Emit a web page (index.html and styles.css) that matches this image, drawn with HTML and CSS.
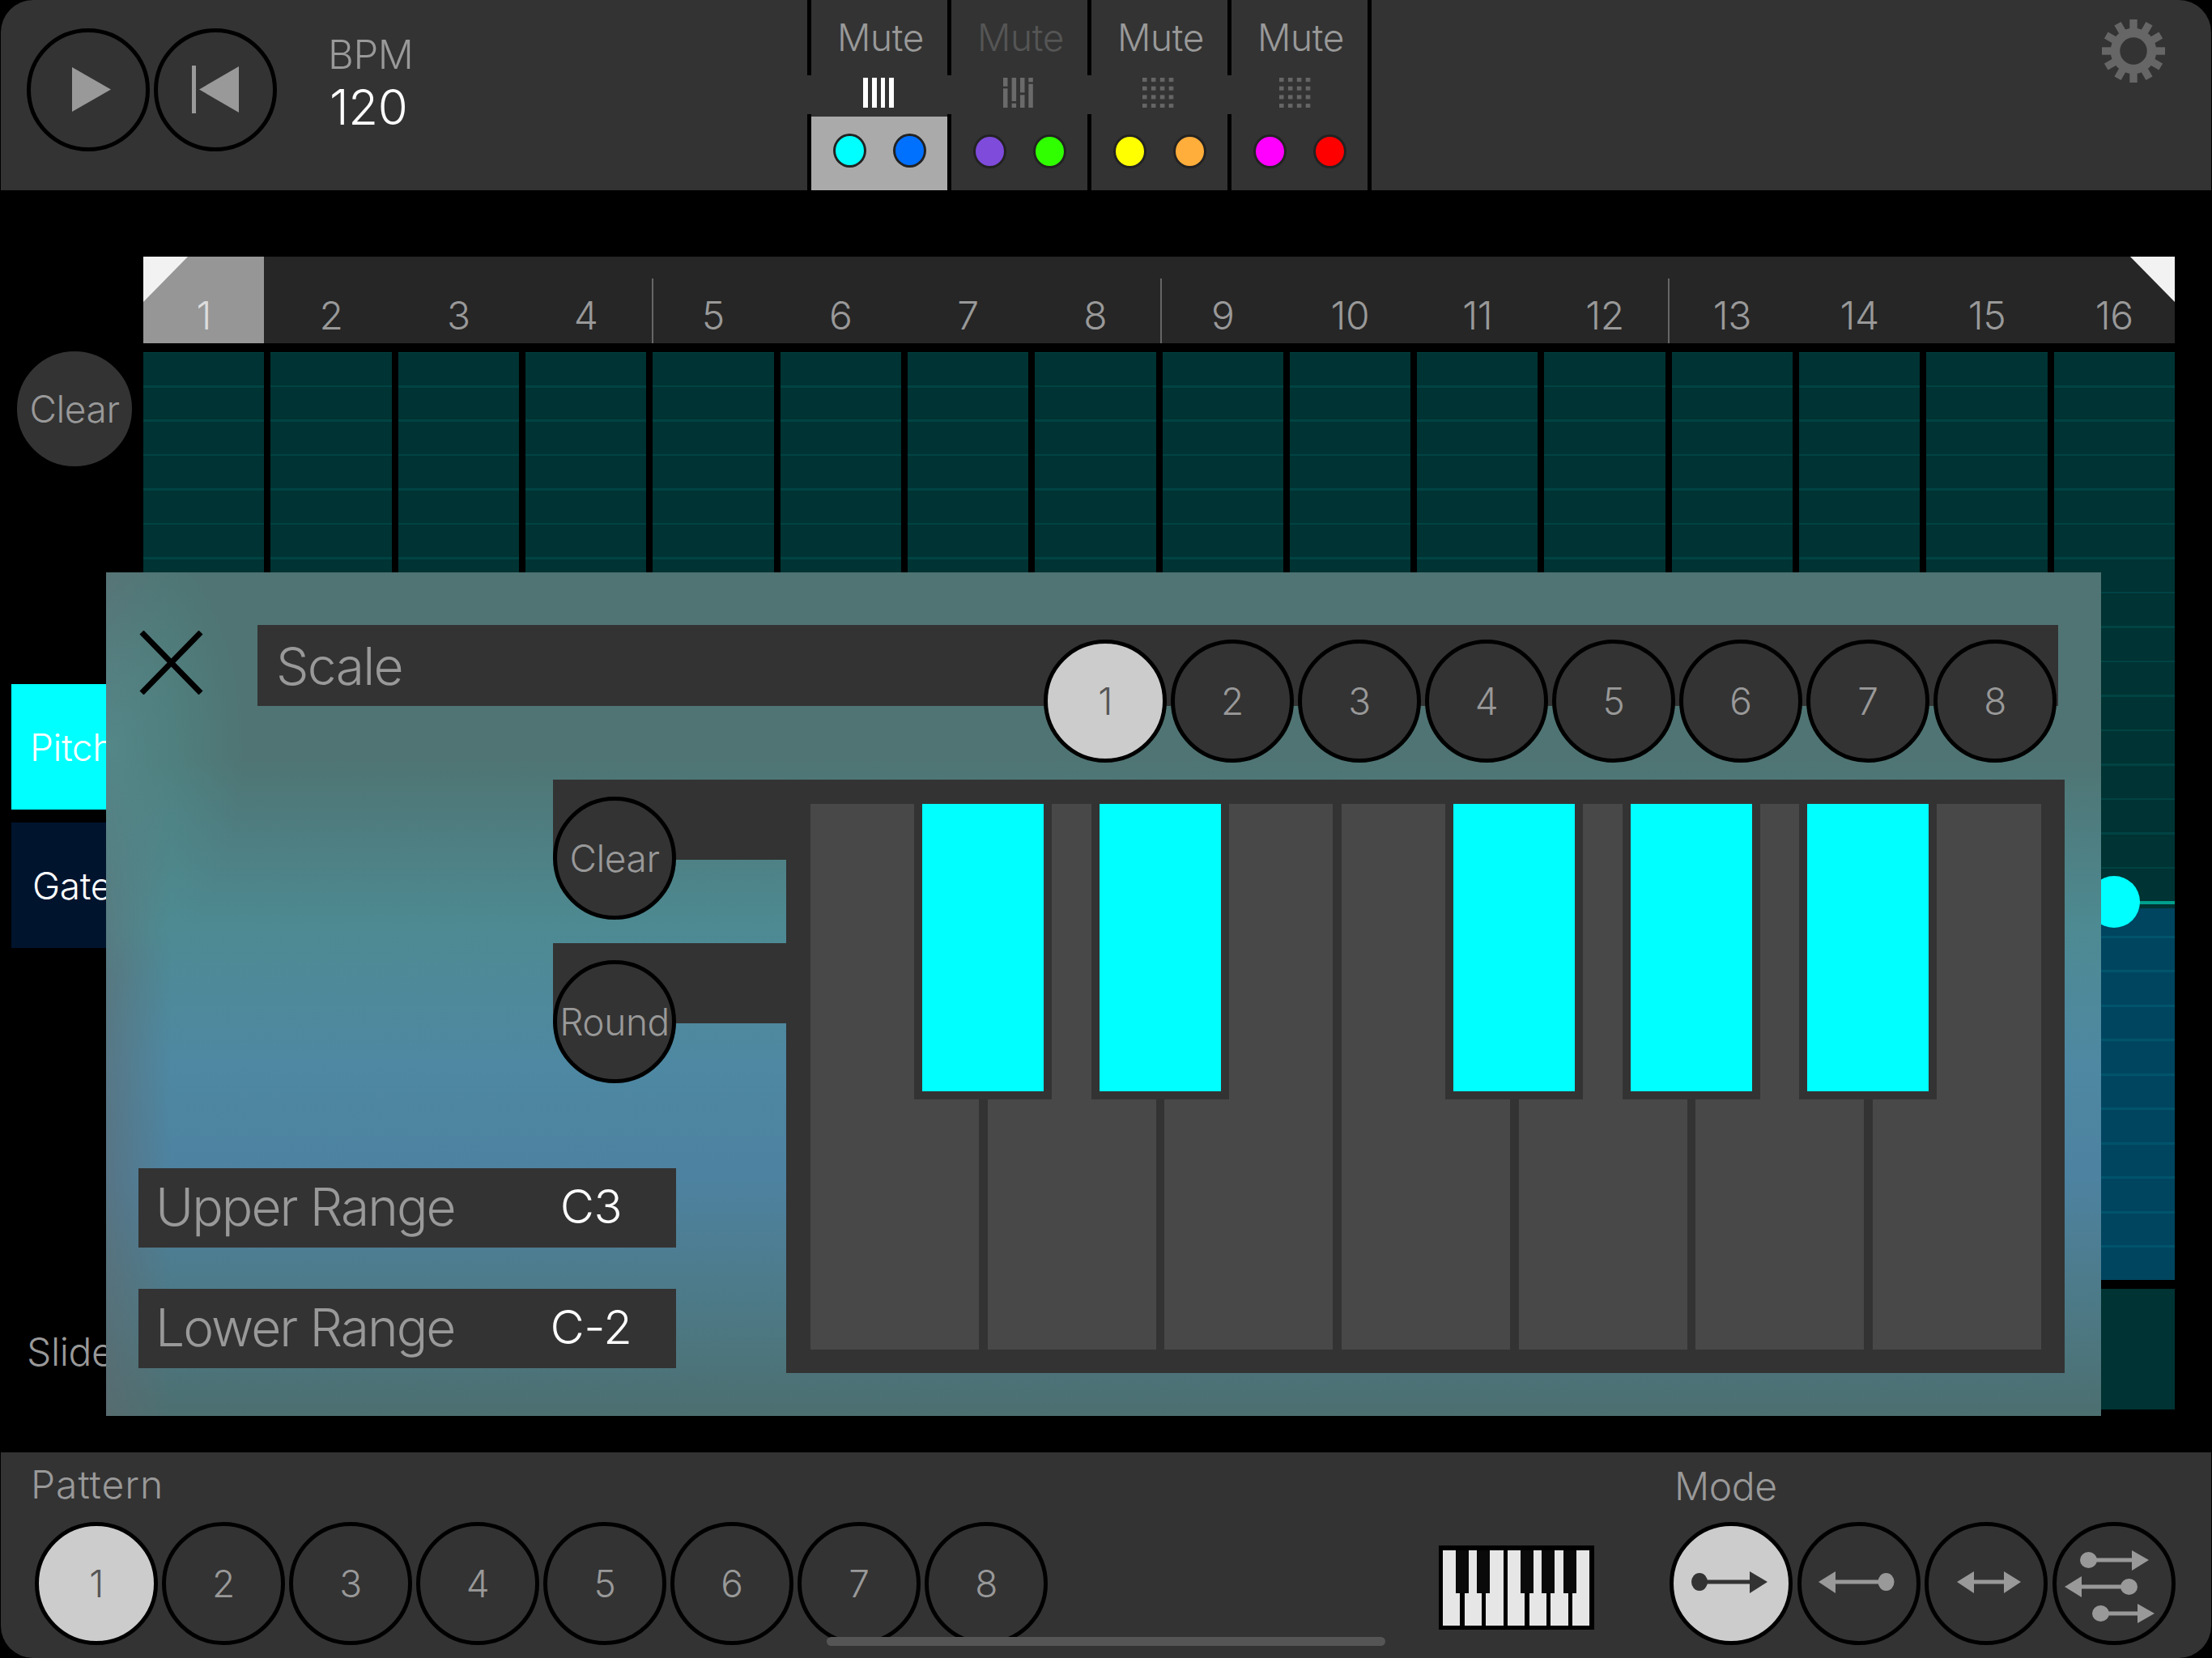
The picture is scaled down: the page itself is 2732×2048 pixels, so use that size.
FILE: index.html
```html
<!DOCTYPE html>
<html lang="en">
<head>
  <meta charset="UTF-8">
  <title>Step sequencer</title>
  <link rel="stylesheet" href="styles.css">
</head>
<body>
  <header class="topbar">
    <div class="transport">
      <button class="round-btn">
        <svg width="142" height="142" viewBox="0 0 142 142"><polygon points="51,43 99,70.5 51,98" fill="#999"/></svg>
      </button>
      <button class="round-btn">
        <svg width="142" height="142" viewBox="0 0 142 142"><rect x="42" y="41" width="5" height="59" fill="#999"/><polygon points="100,42 51,70.5 100,99" fill="#999"/></svg>
      </button>
    </div>
    <div class="bpm">
      <span class="bpm-label">BPM</span>
      <span class="bpm-value">120</span>
    </div>
    <div class="tracks">
      <div class="track">
        <div class="mute">Mute</div>
        <div class="track-icon">
          <svg width="40" height="37" viewBox="0 0 40 37" fill="#fff"><rect x="1" width="6" height="37"/><rect x="12" width="6" height="37"/><rect x="23" width="5" height="37"/><rect x="33" width="6" height="37"/></svg>
        </div>
        <div class="track-colors selected">
          <span class="dot dot-cyan"></span><span class="dot dot-blue"></span>
        </div>
      </div>
      <div class="track">
        <div class="mute mute-off">Mute</div>
        <div class="track-icon">
          <svg width="40" height="37" viewBox="0 0 40 37" fill="#6a6a6a">
            <rect x="1" y="0" width="5.5" height="10.7"/><rect x="1" y="13.3" width="5.5" height="23.7"/>
            <rect x="11.6" y="0" width="5.5" height="29"/><rect x="11.6" y="31.7" width="5.5" height="5.3"/>
            <rect x="22" y="0" width="5.5" height="18.3"/><rect x="22" y="21.3" width="5.5" height="15.7"/>
            <rect x="32.3" y="0" width="5.5" height="5.3"/><rect x="32.3" y="7.7" width="5.5" height="29.3"/>
          </svg>
        </div>
        <div class="track-colors">
          <span class="dot dot-purple"></span><span class="dot dot-green"></span>
        </div>
      </div>
      <div class="track">
        <div class="mute">Mute</div>
        <div class="track-icon">
          <svg width="40" height="37" viewBox="0 0 40 37"><rect width="40" height="37" fill="url(#dots)"/></svg>
        </div>
        <div class="track-colors">
          <span class="dot dot-yellow"></span><span class="dot dot-orange"></span>
        </div>
      </div>
      <div class="track">
        <div class="mute">Mute</div>
        <div class="track-icon">
          <svg width="40" height="37" viewBox="0 0 40 37"><rect width="40" height="37" fill="url(#dots)"/></svg>
        </div>
        <div class="track-colors">
          <span class="dot dot-magenta"></span><span class="dot dot-red"></span>
        </div>
      </div>
    </div>
    <svg class="gear" width="78" height="78" viewBox="-39 -39 78 78">
      <defs>
        <pattern id="dots" width="10.9" height="10.7" patternUnits="userSpaceOnUse"><rect width="5.5" height="5" fill="#666"/></pattern>
      </defs>
      <g fill="#666">
        <rect x="-4.7" y="-39" width="9.4" height="78"/>
        <rect x="-4.7" y="-39" width="9.4" height="78" transform="rotate(30)"/>
        <rect x="-4.7" y="-39" width="9.4" height="78" transform="rotate(60)"/>
        <rect x="-4.7" y="-39" width="9.4" height="78" transform="rotate(90)"/>
        <rect x="-4.7" y="-39" width="9.4" height="78" transform="rotate(120)"/>
        <rect x="-4.7" y="-39" width="9.4" height="78" transform="rotate(150)"/>
      </g>
      <circle r="22.5" fill="none" stroke="#666" stroke-width="11.5"/>
      <circle r="16.7" fill="#333"/>
    </svg>
  </header>

  <main class="sequencer">
    <aside class="side">
      <button class="round-btn side-clear">Clear</button>
      <div class="tab tab-pitch">Pitch</div>
      <div class="tab tab-gate">Gate</div>
      <div class="slide-label">Slide</div>
    </aside>
    <section class="steps">
      <div class="step-numbers" id="step-numbers"></div>
      <div class="lanes" id="lanes"></div>
    </section>

    <div class="modal">
      <div class="modal-head">
        <svg class="close" width="79" height="79" viewBox="0 0 79 79"><path d="M3 2 L76 77 M76 2 L3 77" stroke="#000" stroke-width="7" fill="none"/></svg>
        <div class="scale-bar">
          <span class="scale-title">Scale</span>
          <div class="circle-row">
            <button class="round-btn active">1</button>
            <button class="round-btn">2</button>
            <button class="round-btn">3</button>
            <button class="round-btn">4</button>
            <button class="round-btn">5</button>
            <button class="round-btn">6</button>
            <button class="round-btn">7</button>
            <button class="round-btn">8</button>
          </div>
        </div>
      </div>
      <div class="modal-body">
        <div class="modal-left">
          <div class="strip"><button class="round-btn">Clear</button></div>
          <div class="strip strip-round"><button class="round-btn">Round</button></div>
          <div class="range range-upper"><span>Upper Range</span><b>C3</b></div>
          <div class="range"><span>Lower Range</span><b>C-2</b></div>
        </div>
        <div class="keyboard-panel">
          <div class="keyboard">
            <div class="white-key"></div>
            <div class="white-key"></div>
            <div class="white-key"></div>
            <div class="white-key"></div>
            <div class="white-key"></div>
            <div class="white-key"></div>
            <div class="white-key"></div>
            <div class="black-key key-1"></div>
            <div class="black-key key-2"></div>
            <div class="black-key key-3"></div>
            <div class="black-key key-4"></div>
            <div class="black-key key-5"></div>
          </div>
        </div>
      </div>
    </div>
  </main>

  <footer class="bottombar">
    <div class="pattern">
      <div class="bar-label">Pattern</div>
      <div class="circle-row">
        <button class="round-btn active">1</button>
        <button class="round-btn">2</button>
        <button class="round-btn">3</button>
        <button class="round-btn">4</button>
        <button class="round-btn">5</button>
        <button class="round-btn">6</button>
        <button class="round-btn">7</button>
        <button class="round-btn">8</button>
      </div>
    </div>
    <svg class="piano" width="192" height="104" viewBox="0 0 192 104">
      <rect width="192" height="104" fill="#000"/>
      <g fill="#e6e6e6">
        <rect x="5" y="6" width="21" height="93"/><rect x="32" y="6" width="21" height="93"/>
        <rect x="58" y="6" width="22" height="93"/><rect x="85" y="6" width="21" height="93"/>
        <rect x="112" y="6" width="21" height="93"/><rect x="138" y="6" width="22" height="93"/>
        <rect x="165" y="6" width="21" height="93"/>
      </g>
      <g fill="#0a0a0a">
        <rect x="21" y="6" width="16" height="53"/><rect x="47" y="6" width="16" height="53"/>
        <rect x="101" y="6" width="16" height="53"/><rect x="127" y="6" width="16" height="53"/>
        <rect x="154" y="6" width="16" height="53"/>
      </g>
    </svg>
    <div class="mode">
      <div class="bar-label">Mode</div>
      <div class="mode-row">
        <button class="round-btn active">
          <svg width="142" height="142" viewBox="0 0 142 142" fill="#333">
            <ellipse cx="32" cy="69" rx="10" ry="11"/><rect x="40" y="66.5" width="56" height="5"/><polygon points="94,56 116,69 94,83"/>
          </svg>
        </button>
        <button class="round-btn">
          <svg width="142" height="142" viewBox="0 0 142 142" fill="#999">
            <ellipse cx="104.5" cy="69" rx="10" ry="11"/><rect x="41" y="66.5" width="56" height="5"/><polygon points="42,56 21,69 42,83"/>
          </svg>
        </button>
        <button class="round-btn">
          <svg width="142" height="142" viewBox="0 0 142 142" fill="#999">
            <rect x="55" y="66.5" width="39" height="5"/><polygon points="56,56 35,69 56,83"/><polygon points="93,56 114,69 93,83"/>
          </svg>
        </button>
        <button class="round-btn">
          <svg width="142" height="142" viewBox="0 0 142 142" fill="#999">
            <ellipse cx="39.5" cy="42" rx="10.5" ry="10"/><rect x="46" y="39.5" width="48" height="5"/><polygon points="93,30 114,42 93,55"/>
            <ellipse cx="89.5" cy="75" rx="10.5" ry="10"/><rect x="30" y="72.5" width="54" height="5"/><polygon points="31,62 10,75 31,88"/>
            <ellipse cx="54.5" cy="108" rx="10.5" ry="10"/><rect x="61" y="105.5" width="40" height="5"/><polygon points="100,96 121,108 100,120"/>
          </svg>
        </button>
      </div>
    </div>
    <div class="home-indicator"></div>
  </footer>

  <script src="script.js"></script>
</body>
</html>
```

FILE: styles.css
```css
/* General */
* {
  box-sizing: border-box;
}

body {
  font-family: Inter, Roboto, "Liberation Sans", sans-serif;
  font-weight: 350;
  letter-spacing: -0.025em;
  margin: 0;
  width: 2732px;
  height: 2048px;
  overflow: hidden;
  background-color: #000;
  color: #999;
  display: flex;
  flex-direction: column;
}

button {
  font: inherit;
  letter-spacing: inherit;
  color: inherit;
  padding: 0;
}

.round-btn {
  flex: none;
  width: 152px;
  height: 152px;
  border: 5px solid #000;
  border-radius: 50%;
  background-color: #333;
  font-size: 46px;
  display: flex;
  align-items: center;
  justify-content: center;
}

.round-btn.active {
  background-color: #ccc;
  color: #555;
}

.circle-row {
  display: flex;
  gap: 5px;
}

/* Top bar */
.topbar {
  height: 235px;
  margin: 0 1px;
  background-color: #333;
  border-radius: 40px 40px 0 0;
  display: flex;
  position: relative;
}

.transport {
  display: flex;
  gap: 5px;
  margin: 35px 0 0 32px;
}

.bpm {
  display: flex;
  flex-direction: column;
  margin: 39px 0 0 63px;
  width: 592px;
}

.bpm-label {
  font-size: 49px;
  line-height: 58px;
}

.bpm-value {
  font-size: 60px;
  line-height: 70px;
  color: #fff;
  padding-left: 2px;
}

.tracks {
  display: flex;
  border-right: 5px solid #000;
  height: 235px;
}

.track {
  width: 173px;
  display: flex;
  flex-direction: column;
  border-left: 5px solid #000;
}

.mute {
  height: 93px;
  font-size: 46px;
  line-height: 92px;
  text-align: center;
  padding-left: 3px;
}

.mute-off {
  color: #555;
}

.track-icon {
  height: 48px;
  margin-left: -5px;
  background-color: #333;
  display: flex;
  justify-content: center;
  padding: 3px 0 0 3px;
}

.track:last-child .track-icon {
  padding: 3px 6px 0 0;
}

.track-colors {
  flex: 1;
  display: flex;
  justify-content: center;
  align-items: center;
  gap: 33px;
  padding-bottom: 2px;
}

.track-colors.selected {
  background-color: #aaa;
  margin-top: 3px;
  padding-bottom: 8px;
}

.dot {
  width: 41px;
  height: 42px;
  border-radius: 50%;
  border: 3px solid #222;
}

.dot-cyan { background-color: #0ff; }
.dot-blue { background-color: #0070ff; }
.dot-purple { background-color: #7f4bdb; }
.dot-green { background-color: #30ff00; }
.dot-yellow { background-color: #ff0; }
.dot-orange { background-color: #ffad3b; }
.dot-magenta { background-color: #f0f; }
.dot-red { background-color: #f00; }

.gear {
  position: absolute;
  top: 23.5px;
  right: 57px;
}

/* Sequencer */
.sequencer {
  flex: 1;
  display: flex;
  position: relative;
  padding-top: 82px;
}

.side {
  width: 177px;
  flex: none;
}

.side-clear {
  margin: 112px 0 0 16px;
}

.tab {
  width: 150px;
  height: 155px;
  margin-left: 14px;
  font-size: 46px;
  color: #fff;
  display: flex;
  align-items: center;
  justify-content: center;
}

.tab-pitch {
  margin-top: 264px;
  background-color: #0ff;
}

.tab-gate {
  margin-top: 16px;
  background-color: #00142e;
}

.slide-label {
  margin: 469px 0 0 33px;
  font-size: 48px;
}

.steps {
  width: 2509px;
  flex: none;
}

.step-numbers {
  height: 107px;
  background-color: #262626;
  display: flex;
  gap: 8px;
  position: relative;
}

.step-numbers::before,
.step-numbers::after {
  content: "";
  position: absolute;
  top: 0;
  width: 0;
  height: 0;
  border-top: 56px solid #f2f2f2;
  z-index: 1;
}

.step-numbers::before {
  left: 0;
  border-right: 55px solid transparent;
}

.step-numbers::after {
  right: 0;
  border-left: 55px solid transparent;
}

.step-number {
  flex: 1;
  font-size: 48px;
  text-align: center;
  line-height: 56px;
  padding-top: 45px;
  position: relative;
}

.step-number.current {
  background-color: #969696;
  color: #ddd;
}

.step-number.bar-start::before {
  content: "";
  position: absolute;
  left: -1px;
  bottom: 0;
  width: 2px;
  height: 80px;
  background-color: #666;
}

.step-number:nth-child(9)::before {
  left: -3px;
}

.step-number:nth-child(13)::before {
  left: -5px;
}

.lanes {
  display: flex;
  gap: 8px;
  margin-top: 11px;
}

.lane-column {
  flex: 1;
  position: relative;
}

.lane {
  height: 1146px;
  background-image:
    repeating-linear-gradient(to bottom, rgba(0, 255, 255, 0.08) 0, rgba(0, 255, 255, 0.08) 1px, transparent 1px, transparent 41px, rgba(0, 255, 255, 0.08) 41px, rgba(0, 255, 255, 0.08) 42.5px),
    linear-gradient(to bottom, #003333 687px, #004560 687px);
}

.slide-cell {
  height: 149px;
  margin-top: 11px;
  background-color: #003333;
}

.value-line {
  position: absolute;
  top: 678px;
  left: 0;
  right: 0;
  height: 4px;
  background-color: #00a08c;
}

.knob {
  position: absolute;
  top: 647px;
  left: 42px;
  width: 64px;
  height: 64px;
  border-radius: 50%;
  background-color: #0ff;
}

/* Scale modal */
.modal {
  position: absolute;
  left: 131px;
  top: 472px;
  width: 2464px;
  height: 1042px;
  padding: 65px 0 0 41px;
  background:
    radial-gradient(ellipse 170px 280px at 0 215px, rgba(80, 160, 160, 0.5), transparent),
    linear-gradient(to right, rgba(95, 105, 110, 0.55), transparent 80px),
    linear-gradient(to bottom, #4f7473 0, #4f7473 22%, #4d8a92 42%, #4e88a2 58%, #4d82a0 72%, #4d7a88 86%, #4c6f70 100%);
}

.modal-head {
  display: flex;
  height: 100px;
}

.close {
  margin-top: 7px;
}

.scale-bar {
  width: 2224px;
  height: 100px;
  margin-left: 67px;
  padding-right: 2px;
  background-color: #333;
  display: flex;
  justify-content: space-between;
  align-items: flex-start;
}

.scale-title {
  font-size: 64px;
  line-height: 102px;
  margin-left: 23px;
  letter-spacing: -0.025em;
}

.scale-bar .circle-row {
  margin-top: 18px;
}

.modal-body {
  display: flex;
  margin-top: 91px;
  height: 733px;
}

.modal-left {
  width: 800px;
  flex: none;
  margin-left: -1px;
}

.strip {
  width: 288px;
  height: 99px;
  margin-left: 512px;
  background-color: #333;
  padding-top: 21px;
}

.strip-round {
  margin-top: 103px;
}

.strip .round-btn {
  position: relative;
}

.range {
  width: 664px;
  height: 98px;
  margin-top: 51px;
  padding: 0 0 4px 21px;
  background-color: #333;
  display: flex;
  align-items: center;
  font-size: 64px;
}

.range-upper {
  margin-top: 179px;
}

.range span {
  width: 538px;
  white-space: nowrap;
  letter-spacing: -0.03em;
}

.range b {
  width: 0;
  display: flex;
  justify-content: center;
  font-size: 58px;
  font-weight: 350;
  color: #fff;
  white-space: nowrap;
}

.keyboard-panel {
  width: 1579px;
  height: 733px;
  background-color: #333;
  padding: 30px 29px 30px 30px;
}

.keyboard {
  height: 674px;
  display: grid;
  grid-template-columns: repeat(7, 1fr);
  gap: 10.6px;
  position: relative;
}

.white-key {
  background-color: #484848;
}

.black-key {
  position: absolute;
  top: 0;
  width: 170px;
  height: 365px;
  background-color: #0ff;
  border: 10px solid #333;
  border-top: 0;
}

.key-1 { left: 128px; }
.key-2 { left: 347px; }
.key-3 { left: 784px; }
.key-4 { left: 1003px; }
.key-5 { left: 1221px; }

/* Bottom bar */
.bottombar {
  height: 254px;
  margin: 0 1px;
  background-color: #333;
  border-radius: 0 0 40px 40px;
  display: flex;
  position: relative;
}

.bar-label {
  font-size: 48px;
  line-height: 56px;
}

.pattern {
  margin: 12px 0 0 37px;
  width: 1739px;
}

.pattern .bar-label {
  margin-bottom: 18px;
  letter-spacing: 0.02em;
}

.pattern .circle-row {
  margin-left: 5px;
}

.piano {
  margin-top: 115px;
  flex: none;
}

.mode {
  margin: 14px 0 0 99px;
}

.mode .bar-label {
  margin-bottom: 16px;
}

.mode-row {
  display: flex;
  gap: 5.5px;
  margin-left: -6px;
}

.home-indicator {
  position: absolute;
  left: 1020px;
  top: 228px;
  width: 690px;
  height: 11px;
  border-radius: 6px;
  background-color: #555;
}
```

FILE: script.js
```js
const stepNumbers = document.getElementById("step-numbers");
const lanes = document.getElementById("lanes");

for (let step = 1; step <= 16; step++) {
  const number = document.createElement("div");
  number.className = "step-number";
  if (step === 1) number.classList.add("current");
  if (step % 4 === 1 && step > 1) number.classList.add("bar-start");
  number.textContent = step;
  stepNumbers.appendChild(number);

  const column = document.createElement("div");
  column.className = "lane-column";
  column.innerHTML = `<div class="lane"></div><div class="slide-cell"></div>`;
  if (step === 16) {
    column.innerHTML += `<div class="value-line"></div><div class="knob"></div>`;
  }
  lanes.appendChild(column);
}
```
